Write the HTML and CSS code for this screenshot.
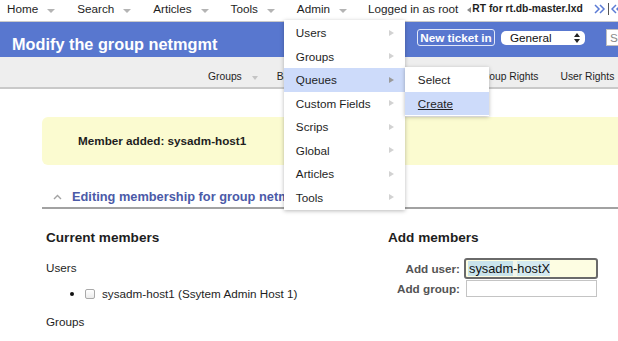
FILE: index.html
```html
<!DOCTYPE html>
<html lang="en">
  <head>
    <meta charset="UTF-8">
    <title>Modify the group netmgmt</title>
    <link rel="stylesheet" href="styles.css">
  </head>
  <body>
    <div class="topnav">
      <ul class="menu">
        <li class="menu-item">Home<span class="down"></span></li>
        <li class="menu-item">Search<span class="down"></span></li>
        <li class="menu-item">Articles<span class="down"></span></li>
        <li class="menu-item">Tools<span class="down"></span></li>
        <li class="menu-item admin">Admin<span class="down"></span>
          <ul class="dropdown">
            <li>Users<span class="right"></span></li>
            <li>Groups<span class="right"></span></li>
            <li class="active">Queues<span class="right dark"></span>
              <ul class="submenu">
                <li>Select</li>
                <li class="active"><u>Create</u></li>
              </ul>
            </li>
            <li>Custom Fields<span class="right"></span></li>
            <li>Scrips<span class="right"></span></li>
            <li>Global<span class="right"></span></li>
            <li>Articles<span class="right"></span></li>
            <li>Tools<span class="right"></span></li>
          </ul>
        </li>
      </ul>
      <span class="logged">Logged in as root</span>
      <span class="mark"></span>
      <span class="rtname">RT for rt.db-master.lxd</span>
      <svg class="chev" width="12" height="10" viewBox="0 0 12 10"><polyline points="1,1 5,5 1,9" fill="none" stroke="#5b7bd5" stroke-width="1.5"/><polyline points="6,1 10,5 6,9" fill="none" stroke="#5b7bd5" stroke-width="1.5"/></svg>
      <span class="sep"></span>
      <svg class="chev-back" width="12" height="10" viewBox="0 0 12 10"><polyline points="5,1 1,5 5,9" fill="none" stroke="#5b7bd5" stroke-width="1.5"/><polyline points="10,1 6,5 10,9" fill="none" stroke="#5b7bd5" stroke-width="1.5"/></svg>
    </div>

    <div class="header">
      <h1 class="title">Modify the group netmgmt</h1>
      <div class="create">
        <span class="newticket">New ticket in</span>
        <span class="queue">General
          <svg width="6" height="10" viewBox="0 0 6 10"><path d="M3 0 L6 4 H0 Z M3 10 L0 6 H6 Z" fill="#222"/></svg>
        </span>
        <span class="search">Search...</span>
      </div>
    </div>

    <div class="subnav">
      <span class="sub-item">Groups<span class="down"></span></span>
      <span class="sub-item">Basics</span>
      <span class="sub-item">Members</span>
      <span class="sub-item">Memberships</span>
      <span class="sub-item">Group Rights</span>
      <span class="sub-item">User Rights</span>
    </div>

    <div class="content">
      <div class="message">Member added: sysadm-host1</div>

      <div class="section">
        <svg width="9" height="6" viewBox="0 0 9 6"><polyline points="1,5 4.5,1.5 8,5" fill="none" stroke="#a3a3a3" stroke-width="1.4"/></svg>
        Editing membership for group netmgmt
      </div>

      <div class="members">
        <div class="current">
          <h3>Current members</h3>
          <div class="kind">Users</div>
          <div class="member-row">
            <span class="bullet"></span>
            <span class="checkbox"></span>
            <span>sysadm-host1 (Ssytem Admin Host 1)</span>
          </div>
          <div class="kind groups">Groups</div>
        </div>
        <div class="add">
          <h3>Add members</h3>
          <div class="add-form">
            <span class="label">Add user:</span>
            <span class="field focused"><span class="hl">sysadm</span><span class="dash">-</span><span class="hl2">hostX</span></span>
            <span class="label">Add group:</span>
            <span class="field"></span>
          </div>
        </div>
      </div>
    </div>
  </body>
</html>
```

FILE: styles.css
```css
* {
  box-sizing: border-box;
}

body {
  margin: 0;
  font-family: "Liberation Sans", Arial, sans-serif;
  font-size: 11.7px;
  color: #1e1e1e;
  background-color: #ffffff;
  overflow: hidden;
}

/* top menu bar */

.topnav {
  position: relative;
  z-index: 2;
  display: flex;
  align-items: center;
  height: 22px;
  padding: 0 0 3px 7px;
  border-bottom: 1px solid #cacaca;
  line-height: 18px;
  white-space: nowrap;
  background: #ffffff;
}

.menu {
  display: flex;
  list-style: none;
  margin: 0;
  padding: 0;
}

.menu-item {
  position: relative;
  display: flex;
  align-items: center;
  margin-right: 22px;
}

.down {
  width: 0;
  height: 0;
  margin: 3px 0 0 9px;
  border-left: 4px solid transparent;
  border-right: 4px solid transparent;
  border-top: 4px solid #b4b4b4;
}

.logged {
  margin-left: -1px;
}

.mark {
  width: 0;
  height: 0;
  margin: 1px 1px 0 9px;
  border-top: 3px solid transparent;
  border-bottom: 3px solid transparent;
  border-right: 4px solid #8a8a8a;
}

.rtname {
  font-size: 10.3px;
  font-weight: bold;
}

.chev {
  flex: none;
  margin-left: 11px;
}

.sep {
  flex: none;
  width: 1px;
  height: 12px;
  margin-left: 2px;
  background: #555;
}

.chev-back {
  flex: none;
  margin-left: 2px;
}

/* admin dropdown */

.dropdown,
.submenu {
  position: absolute;
  list-style: none;
  margin: 0;
  padding: 1px 0;
  background: #ffffff;
  box-shadow: 0 1px 4px rgba(0, 0, 0, 0.28);
}

.dropdown {
  left: -13px;
  top: 20px;
  width: 121px;
}

.dropdown li {
  position: relative;
  display: flex;
  align-items: center;
  justify-content: space-between;
  height: 23.5px;
  padding: 0 11px 0 12px;
  line-height: 23.5px;
}

.dropdown li.active {
  background-color: #cddbfa;
}

.right {
  width: 0;
  height: 0;
  border-top: 3.5px solid transparent;
  border-bottom: 3.5px solid transparent;
  border-left: 5px solid #d2d2d2;
}

.right.dark {
  border-left-color: #9a9a9a;
}

.submenu {
  left: 100%;
  top: -1px;
  width: 84px;
}

.submenu li {
  padding-left: 13px;
}

/* page header */

.header {
  display: flex;
  height: 35px;
  padding-left: 12px;
  background-color: #5877cf;
  overflow: hidden;
}

.title {
  flex: none;
  width: 405px;
  margin: 11.6px 0 0;
  font-size: 16.3px;
  line-height: 20px;
  color: #ffffff;
  white-space: nowrap;
}

.create {
  display: flex;
  align-items: center;
  height: 17px;
  margin-top: 7px;
  white-space: nowrap;
}

.newticket {
  flex: none;
  width: 78px;
  height: 17px;
  margin-right: 6px;
  border: 1px solid #e2e8f8;
  border-radius: 3px;
  color: #ffffff;
  font-weight: bold;
  line-height: 15px;
  text-align: center;
}

.queue {
  flex: none;
  display: flex;
  align-items: center;
  justify-content: space-between;
  width: 84px;
  height: 14px;
  margin-right: 21px;
  padding: 0 5px 0 9px;
  border-radius: 5px;
  background: #ffffff;
  line-height: 14px;
  color: #111;
}

.search {
  flex: none;
  width: 120px;
  height: 17px;
  padding-left: 3px;
  border: 1px solid #bfbfbf;
  background: #ffffff;
  color: #8a8a8a;
  line-height: 15px;
}

/* page tabs */

.subnav {
  display: flex;
  height: 32px;
  padding: 10px 0 0 208px;
  border-bottom: 2px solid #c9c9c9;
  background-color: #eeeeee;
  font-size: 10.3px;
  line-height: 14px;
  white-space: nowrap;
}

.sub-item {
  display: flex;
  align-items: center;
  margin-right: 22px;
}

.sub-item:first-child {
  margin-right: 19px;
}

.sub-item .down {
  margin: 2px 0 0 10px;
  border-left-width: 3.5px;
  border-right-width: 3.5px;
  border-top-color: #c4c4c4;
}

/* content */

.content {
  padding: 28px 0 0 42px;
}

.message {
  height: 48px;
  margin-right: -12px;
  padding-left: 36px;
  border-radius: 6px;
  background-color: #fbfbd0;
  font-weight: bold;
  line-height: 48px;
}

.section {
  display: flex;
  align-items: center;
  margin-top: 24px;
  padding: 0 0 2px 11px;
  border-bottom: 2px solid #a2a2a2;
  font-size: 12.8px;
  font-weight: bold;
  line-height: 16px;
  color: #4b5aa8;
  white-space: nowrap;
}

.section svg {
  margin-right: 10px;
}

.members {
  display: grid;
  grid-template-columns: 346px 1fr;
  padding-top: 20px;
}

.current {
  padding-left: 4px;
}

h3 {
  margin: 0;
  font-size: 13.6px;
  line-height: 17px;
}

.kind {
  margin-top: 13.5px;
  line-height: 15px;
}

.kind.groups {
  margin-top: 12.7px;
}

.member-row {
  display: flex;
  align-items: center;
  height: 15px;
  margin: 11.5px 0 0 24px;
}

.bullet {
  width: 4px;
  height: 4px;
  border-radius: 50%;
  background: #111;
}

.checkbox {
  width: 10px;
  height: 10px;
  margin: 0 7px 0 11px;
  border: 1px solid #a9a9a9;
  border-radius: 2px;
  background: linear-gradient(#ffffff, #ececec);
}

.add-form {
  display: grid;
  grid-template-columns: 72px 1fr;
  grid-template-rows: 21px 17px;
  column-gap: 5px;
  row-gap: 1px;
  margin-top: 11.8px;
}

.label {
  align-self: center;
  text-align: right;
  font-weight: bold;
  color: #545454;
  white-space: nowrap;
}

.field {
  display: block;
  width: 131px;
  height: 17px;
  margin-left: 1px;
  border: 1px solid #c4c4c4;
  background: #ffffff;
}

.field.focused {
  display: flex;
  align-items: center;
  width: 134px;
  height: 21px;
  margin-left: -1px;
  padding-left: 2px;
  border: 2px solid #6a6a6a;
  border-radius: 3px;
  background: #fdfde2;
  font-size: 12.8px;
  line-height: 15px;
  color: #111;
}

.hl {
  padding-left: 1px;
  background: #c9e4ec;
}

.dash {
  background: #f3f6ea;
}

.hl2 {
  background: #d4e9f0;
}
```
